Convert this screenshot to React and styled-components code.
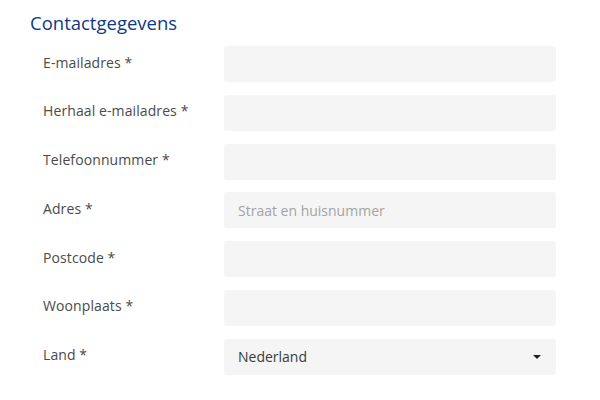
import React from 'react';
import styled, { createGlobalStyle } from 'styled-components';

const GlobalStyle = createGlobalStyle`
  body {
    margin: 0;
    background: #fff;
    font-family: "Open Sans", "Noto Sans", sans-serif;
  }
`;

const Wrapper = styled.div`
  padding: 10px 44px 0 30px;
`;

const Title = styled.h2`
  margin: 0 0 10px;
  font-size: 18.5px;
  font-weight: 400;
  color: #0d3a84;
  line-height: 26px;
`;

const Row = styled.div`
  display: grid;
  grid-template-columns: 194px 1fr;
  align-items: center;
  margin-bottom: 12.8px;
`;

const Label = styled.label`
  padding-left: 13px;
  font-size: 14px;
  color: #4a4a4a;
  letter-spacing: 0.1px;
  margin-top: -4px;
`;

const Field = styled.input`
  box-sizing: border-box;
  height: 36px;
  width: 100%;
  border: none;
  border-radius: 3px;
  background: #f5f5f5;
  padding: 0 14px;
  font-family: inherit;
  font-size: 14px;
  color: #333;
  outline: none;

  &::placeholder {
    color: #a3a3a3;
  }
`;

const Select = styled.div`
  box-sizing: border-box;
  height: 36px;
  display: flex;
  align-items: center;
  justify-content: space-between;
  border-radius: 3px;
  background: #f5f5f5;
  padding: 0 14px;
  font-size: 14px;
  color: #3a3a3a;
`;

const Caret = styled.span`
  width: 0;
  height: 0;
  border-left: 4px solid transparent;
  border-right: 4px solid transparent;
  border-top: 4px solid #222;
  margin-right: 1px;
`;

const fields = [
  { label: 'E-mailadres' },
  { label: 'Herhaal e-mailadres' },
  { label: 'Telefoonnummer' },
  { label: 'Adres', placeholder: 'Straat en huisnummer' },
  { label: 'Postcode' },
  { label: 'Woonplaats' },
];

export default function App() {
  return (
    <>
      <GlobalStyle />
      <Wrapper>
        <Title>Contactgegevens</Title>
        {fields.map((f) => (
          <Row key={f.label}>
            <Label>{f.label} *</Label>
            <Field placeholder={f.placeholder || ''} />
          </Row>
        ))}
        <Row>
          <Label>Land *</Label>
          <Select>
            <span>Nederland</span>
            <Caret />
          </Select>
        </Row>
      </Wrapper>
    </>
  );
}
